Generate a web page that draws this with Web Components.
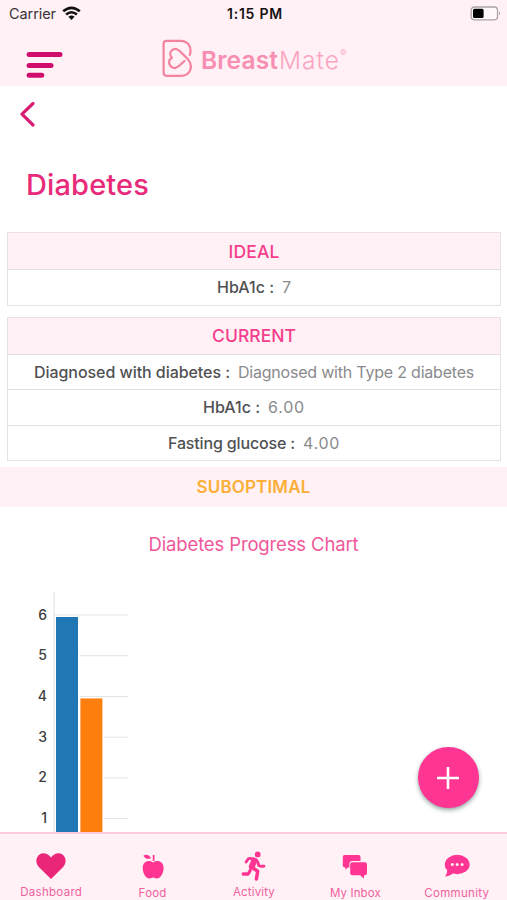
<!DOCTYPE html>
<html lang="en">
<head>
<meta charset="utf-8">
<meta name="viewport" content="width=device-width, initial-scale=1">
<title>BreastMate</title>
<style>
  body {
    margin: 0;
    font-family: Inter, "Liberation Sans", sans-serif;
    --blush: #fff1f5;
    --pink: #ff3593;
    --rose: #e82a7a;
  }
</style>
</head>
<body>
<breast-mate-app></breast-mate-app>

<script>
// Single line of text, tracked so that it fills the given width
class TrackedText extends HTMLElement {
  constructor() {
    super();
    this.attachShadow({ mode: 'open' });
    this.shadowRoot.innerHTML = `
      <style>
        :host { display: inline-block; white-space: nowrap; }
        span { display: inline-block; white-space: nowrap; }
      </style>
      <span><slot></slot></span>
    `;
  }

  connectedCallback() {
    const width = parseFloat(this.getAttribute('width'));
    const span = this.shadowRoot.querySelector('span');
    const count = this.textContent.length;
    if (!width || !count) return;
    const natural = span.getBoundingClientRect().width;
    span.style.letterSpacing = ((width - natural) / count) + 'px';
  }
}

class StatusBar extends HTMLElement {
  constructor() {
    super();
    this.attachShadow({ mode: 'open' });
    this.shadowRoot.innerHTML = `
      <style>
        :host {
          display: grid;
          grid-template-columns: 1fr auto 1fr;
          align-items: center;
          height: 27px;
          padding: 0 6px 0 9px;
          color: #171315;
          font-size: 14.5px;
        }
        .left { display: flex; align-items: center; gap: 6px; }
        .carrier { color: #383336; }
        .time { font-size: 14px; font-weight: 600; }
        .battery { justify-self: end; }
        svg { display: block; }
      </style>
      <div class="left">
        <tracked-text class="carrier" width="47">Carrier</tracked-text>
        <svg width="19" height="15" viewBox="0 0 19 15" fill="none" stroke="#111" stroke-width="2.6">
          <path d="M1.2 5.3Q9.5 -1.7 17.8 5.3"/>
          <path d="M4.1 8.5Q9.5 4 14.9 8.5"/>
          <path d="M6.4 10.8Q9.5 8.3 12.6 10.8L9.5 14Z" fill="#111" stroke="none"/>
        </svg>
      </div>
      <tracked-text class="time" width="56">1:15 PM</tracked-text>
      <svg class="battery" width="31" height="15" viewBox="0 0 31 15">
        <rect x="1.2" y="1" width="26.3" height="12.8" rx="3.2" fill="#fff8fa" stroke="#aaa2a6" stroke-width="1.3"/>
        <rect x="3" y="2.8" width="10.6" height="9.3" rx="1.6" fill="#000"/>
        <path d="M29 5.2Q31 7.4 29 9.6Z" fill="#aaa2a6"/>
      </svg>
    `;
  }
}

class BrandHeader extends HTMLElement {
  constructor() {
    super();
    this.attachShadow({ mode: 'open' });
    this.shadowRoot.innerHTML = `
      <style>
        :host {
          display: flex;
          align-items: flex-start;
          height: 59px;
          padding-left: 26px;
        }
        svg { display: block; }
        .menu { margin-top: 24px; }
        .logo { margin: 12px 0 0 98px; }
        .name {
          display: flex;
          margin: 19px 0 0 9px;
          font-size: 24.5px;
          line-height: 28px;
        }
        .bold { font-weight: 600; color: #f88fb2; }
        .thin { font-weight: 300; color: #fba4c1; margin-left: 1px; }
        .mark { font-size: 7px; line-height: 12px; color: #fba9c4; margin-top: 1px; }
      </style>
      <svg class="menu" width="38" height="29" viewBox="0 0 38 29" stroke="#d00d6c" stroke-width="5" stroke-linecap="round">
        <path d="M3.1 3.5H34M3.1 14.4H25M3.1 24.3H15.8"/>
      </svg>
      <svg class="logo" width="30" height="39" viewBox="161.5 39 30 39" fill="none" stroke="#f3839f" stroke-width="2.2" stroke-linecap="round" stroke-linejoin="round">
        <path d="M189.3 55C191.6 47.5 188 40.9 180 40.9H166Q163.1 40.9 163.1 43.8V72.8Q163.1 75.8 166 75.8H180.3C190.2 75.8 193 66 187.6 59.4L179.4 51.2C173.4 45.8 166.7 52 171.3 57.7C166.5 60.7 168.7 67.6 174.4 68.1C177.4 67.7 180.6 64 184 61"/>
      </svg>
      <div class="name">
        <tracked-text class="bold" width="77">Breast</tracked-text>
        <tracked-text class="thin" width="61">Mate</tracked-text>
        <span class="mark">©</span>
      </div>
    `;
  }
}

class PageHeading extends HTMLElement {
  constructor() {
    super();
    this.attachShadow({ mode: 'open' });
    this.shadowRoot.innerHTML = `
      <style>
        :host { display: block; height: 146px; }
        svg { display: block; padding: 15px 0 0 19px; }
        h1 {
          margin: 41px 0 0 26px;
          font-size: 29px;
          line-height: 34px;
          font-weight: 500;
          color: var(--rose);
        }
      </style>
      <svg width="17" height="26" viewBox="0 0 17 26" fill="none" stroke="#d91d72" stroke-width="3.2" stroke-linecap="round" stroke-linejoin="round">
        <path d="M14 2.5L3 13.2L14 24"/>
      </svg>
      <h1><tracked-text width="123">Diabetes</tracked-text></h1>
    `;
  }
}

class ResultTable extends HTMLElement {
  constructor() {
    super();
    this.attachShadow({ mode: 'open' });
    this.shadowRoot.innerHTML = `
      <style>
        :host {
          display: block;
          margin: 0 6px 11px 7px;
          border: 1px solid #e8e1e4;
        }
        .title {
          display: flex;
          align-items: center;
          justify-content: center;
          height: 36px;
          background: var(--blush);
          color: #f43e8c;
          font-size: 17.5px;
          font-weight: 500;
        }
      </style>
      <div class="title"><slot name="title"></slot></div>
      <slot></slot>
    `;
  }
}

class ResultRow extends HTMLElement {
  connectedCallback() {
    const attr = name => this.getAttribute(name);
    this.attachShadow({ mode: 'open' });
    this.shadowRoot.innerHTML = `
      <style>
        :host {
          display: flex;
          align-items: center;
          justify-content: center;
          gap: 8px;
          height: 34.6px;
          border-top: 1px solid #e3e0e1;
          font-size: 16px;
        }
        .label { font-weight: 500; color: #505153; }
        .value { color: #8a8a8c; font-weight: 400; }
      </style>
      <tracked-text class="label" width="${attr('label-width')}">${attr('label')} :</tracked-text>
      <tracked-text class="value" width="${attr('value-width')}">${attr('value')}</tracked-text>
    `;
  }
}

class StatusBand extends HTMLElement {
  constructor() {
    super();
    this.attachShadow({ mode: 'open' });
    this.shadowRoot.innerHTML = `
      <style>
        :host {
          display: flex;
          align-items: center;
          justify-content: center;
          box-sizing: border-box;
          height: 40px;
          margin-top: -5px;
          padding-bottom: 1px;
          background: var(--blush);
          color: #fcaf38;
          font-size: 17px;
          font-weight: 600;
        }
      </style>
      <slot></slot>
    `;
  }
}

class ProgressChart extends HTMLElement {
  connectedCallback() {
    const bars = JSON.parse(this.getAttribute('bars'));
    const unit = 40.72;
    const y = value => 24 + (6 - value) * unit;
    const ticks = [6, 5, 4, 3, 2, 1].map(v => `
      <path d="M55 ${y(v)}H128" stroke="#e3e3e3"/>
      <text x="47" y="${y(v) + 4.5}">${v}</text>`).join('');
    const rects = bars.map((bar, i) => `
      <rect x="${54.5 + i * 24.4}" y="${y(bar.value) + 1}" width="25" height="300" fill="#fff"/>
      <rect x="${56 + i * 24.4}" y="${y(bar.value) + 2}" width="22" height="300" fill="${bar.color}"/>`).join('');

    this.attachShadow({ mode: 'open' });
    this.shadowRoot.innerHTML = `
      <style>
        :host { display: block; }
        .title {
          text-align: center;
          margin-top: 24px;
          font-size: 18.5px;
          line-height: 26px;
          font-weight: 400;
          color: #f0579a;
        }
        svg { display: block; margin-top: 34px; }
        text { font-size: 14px; font-weight: 500; fill: #404040; text-anchor: end; }
      </style>
      <div class="title"><slot></slot></div>
      <svg width="200" height="250" viewBox="0 0 200 250">
        ${ticks}
        ${rects}
        <path d="M54 1V250" stroke="#dedede"/>
      </svg>
    `;
  }
}

class AddButton extends HTMLElement {
  constructor() {
    super();
    this.attachShadow({ mode: 'open' });
    this.shadowRoot.innerHTML = `
      <style>
        :host {
          position: absolute;
          right: 28px;
          bottom: 92px;
          width: 61px;
          height: 61px;
        }
        button {
          display: grid;
          place-items: center;
          width: 61px;
          height: 61px;
          padding: 0;
          border: 0;
          border-radius: 50%;
          background: var(--pink);
          box-shadow: 0 2px 4px rgba(40, 70, 70, 0.5);
        }
        svg { display: block; margin-right: 1px; }
      </style>
      <button aria-label="Add">
        <svg width="22" height="22" viewBox="0 0 22 22" stroke="#fff" stroke-width="2.6"><path d="M11 0V22M0 11H22"/></svg>
      </button>
    `;
  }
}

const ICONS = {
  heart: `<path fill="#e92678" d="M15 28L2.6 15.7C-1.5 11.3 0 3 7.2 2.3C10.9 2 13.4 4.4 15 6.6C16.6 4.4 19.1 2 22.8 2.3C30 3 31.5 11.3 27.4 15.7Z"/>`,
  apple: `<path d="M15 10.5C10.6 7.3 4.7 9.7 4.7 16C4.7 21 7.7 26.5 11.3 26.5C13 26.5 13.7 25.6 15 25.6S17.3 26.5 19 26.5C22.5 26.5 25.6 21 25.6 16C25.6 9.7 19.5 7.3 15 10.5Z"/>
    <path d="M15.6 3V9" fill="none" stroke="currentColor" stroke-width="1.7"/>
    <path d="M5.4 3.7C8.4 1.8 11.7 3.3 12.9 6.2C9.6 7.6 7 6.7 5.4 3.7Z"/>`,
  run: `<circle cx="18.7" cy="3.4" r="2.9"/>
    <g fill="none" stroke="currentColor" stroke-linecap="round" stroke-linejoin="round">
      <path d="M7.1 11L9.3 7.8Q10.2 7 14.7 8" stroke-width="2.9"/>
      <path d="M15.2 9.7L12.8 15.6" stroke-width="6"/>
      <path d="M17 8.7Q18.7 10 19.7 14.5Q21.8 15.6 25 15.1" stroke-width="2.9"/>
      <path d="M13.5 16.7L18.7 20.2L17.4 28" stroke-width="3.5"/>
      <path d="M4.2 23H9.2L11.2 19.5" stroke-width="3.3"/>
    </g>`,
  inbox: `<path d="M4.7 3H18.6Q20.5 3 20.5 4.9V9H12.2Q9.4 9 9.4 11.8V15.5H7.6L5.5 18V15.5H4.7Q2.8 15.5 2.8 13.6V4.9Q2.8 3 4.7 3Z"/>
    <path d="M12.3 10.2H24.9Q27 10.2 27 12.3V21.2Q27 23.2 24.9 23.2H24V26.7L20.2 23.2H12.3Q10.2 23.2 10.2 21.2V12.3Q10.2 10.2 12.3 10.2Z"/>`,
  chat: `<ellipse cx="15.2" cy="12.5" rx="12.4" ry="9.7"/>
    <path d="M4.8 16Q6.2 20.5 3 24.5Q8.5 24 12 20.5Z"/>
    <g fill="#fff1f5"><circle cx="10.3" cy="12.6" r="1.5"/><circle cx="15.2" cy="12.6" r="1.5"/><circle cx="20.1" cy="12.6" r="1.5"/></g>`
};

class TabItem extends HTMLElement {
  connectedCallback() {
    this.attachShadow({ mode: 'open' });
    this.shadowRoot.innerHTML = `
      <style>
        :host {
          display: flex;
          flex-direction: column;
          align-items: center;
          padding: var(--drop, 18px) 0 0 1px;
          color: var(--pink);
        }
        svg { display: block; fill: currentColor; overflow: visible; }
        .label { color: #f0609f; font-size: 11.5px; line-height: 14px; margin-top: 4px; }
      </style>
      <svg width="30" height="30" viewBox="0 0 30 30">${ICONS[this.getAttribute('icon')]}</svg>
      <tracked-text class="label" width="${this.getAttribute('width')}">${this.getAttribute('label')}</tracked-text>
    `;
  }
}

class TabBar extends HTMLElement {
  constructor() {
    super();
    this.attachShadow({ mode: 'open' });
    this.shadowRoot.innerHTML = `
      <style>
        :host {
          display: grid;
          grid-template-columns: repeat(5, 1fr);
          flex: none;
          box-sizing: border-box;
          height: 68px;
          border-top: 2px solid #ffcbdc;
          background: var(--blush);
        }
        .high { --drop: 17px; }
      </style>
      <tab-item class="high" icon="heart" label="Dashboard" width="62"></tab-item>
      <tab-item icon="apple" label="Food" width="28"></tab-item>
      <tab-item class="high" icon="run" label="Activity" width="42"></tab-item>
      <tab-item icon="inbox" label="My Inbox" width="51"></tab-item>
      <tab-item icon="chat" label="Community" width="65"></tab-item>
    `;
  }
}

class BreastMateApp extends HTMLElement {
  constructor() {
    super();
    this.attachShadow({ mode: 'open' });
    this.shadowRoot.innerHTML = `
      <style>
        :host {
          display: flex;
          flex-direction: column;
          position: relative;
          height: 100vh;
          overflow: hidden;
          background: #fff;
        }
        header { background: var(--blush); flex: none; }
        main { flex: 1; min-height: 0; overflow: hidden; }
      </style>
      <header>
        <status-bar></status-bar>
        <brand-header></brand-header>
      </header>
      <main>
        <page-heading></page-heading>
        <result-table>
          <tracked-text slot="title" width="51">IDEAL</tracked-text>
          <result-row label="HbA1c" value="7" label-width="57" value-width="9"></result-row>
        </result-table>
        <result-table>
          <tracked-text slot="title" width="84">CURRENT</tracked-text>
          <result-row label="Diagnosed with diabetes" value="Diagnosed with Type 2 diabetes" label-width="196" value-width="236"></result-row>
          <result-row label="HbA1c" value="6.00" label-width="57" value-width="37"></result-row>
          <result-row label="Fasting glucose" value="4.00" label-width="127" value-width="37"></result-row>
        </result-table>
        <status-band><tracked-text width="114">SUBOPTIMAL</tracked-text></status-band>
        <progress-chart bars='[{"value":6,"color":"#2077b4"},{"value":4,"color":"#ff7f0e"}]'>
          <tracked-text width="210">Diabetes Progress Chart</tracked-text>
        </progress-chart>
      </main>
      <add-button></add-button>
      <tab-bar></tab-bar>
    `;
  }
}

customElements.define('status-bar', StatusBar);
customElements.define('brand-header', BrandHeader);
customElements.define('page-heading', PageHeading);
customElements.define('result-table', ResultTable);
customElements.define('result-row', ResultRow);
customElements.define('status-band', StatusBand);
customElements.define('progress-chart', ProgressChart);
customElements.define('add-button', AddButton);
customElements.define('tab-item', TabItem);
customElements.define('tab-bar', TabBar);
customElements.define('breast-mate-app', BreastMateApp);
// Last, so every text is already laid out when it is measured
customElements.define('tracked-text', TrackedText);
</script>
</body>
</html>
